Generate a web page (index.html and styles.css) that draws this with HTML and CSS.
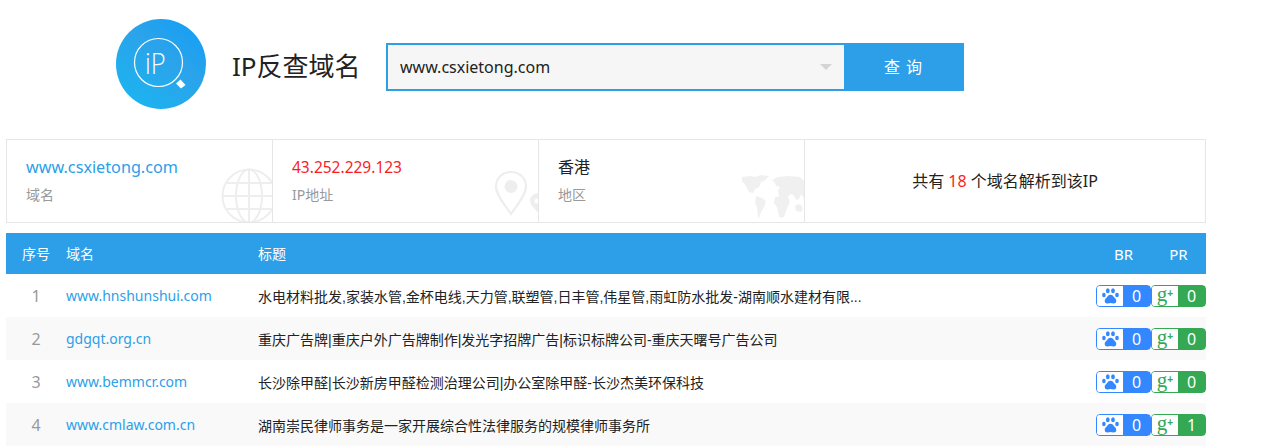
FILE: index.html
```html
<!DOCTYPE html>
<html lang="zh-CN">
<head>
  <meta charset="UTF-8" />
  <title>IP反查域名</title>
  <link rel="stylesheet" href="styles.css">
</head>
<body>
  <header class="search-head">
    <svg class="logo" width="90" height="90" viewBox="0 0 90 90">
      <defs>
        <linearGradient id="logoFill" x1="0.15" y1="0.95" x2="0.85" y2="0.05">
          <stop offset="0" stop-color="#1cb4f0"/>
          <stop offset="0.6" stop-color="#2ba3ea"/>
          <stop offset="1" stop-color="#169ff5"/>
        </linearGradient>
      </defs>
      <circle cx="45" cy="45" r="45" fill="url(#logoFill)"/>
      <circle cx="42.500" cy="43.500" r="24" fill="none" stroke="#fff" stroke-width="1.200"/>
      <text class="logo-text" transform="translate(29 55) scale(0.85 1)">iP</text>
      <path d="M60 64.500l4.500-4 5 5.500-4.500 3.500z" fill="#fff"/>
    </svg>
    <div class="page-title">IP反查域名</div>
    <div class="search-box">
      <div class="search-input">
        <span>www.csxietong.com</span>
        <i class="caret"></i>
      </div>
      <div class="search-btn">查 询</div>
    </div>
  </header>

  <section class="info-bar">
    <div class="info-cell">
      <a class="info-val link">www.csxietong.com</a>
      <div class="info-label">域名</div>
      <svg class="bg-icon globe" width="54" height="58" viewBox="0 0 54 58" fill="none" stroke="#eeeeee" stroke-width="2">
        <circle cx="28" cy="29" r="26.500"/>
        <ellipse cx="28" cy="29" rx="13" ry="26.500"/>
        <path d="M28 2v54M2 29h52M6 16h44M6 42h44"/>
      </svg>
    </div>
    <div class="info-cell">
      <div class="info-val red">43.252.229.123</div>
      <div class="info-label">IP地址</div>
      <svg class="bg-icon pin" width="46" height="46" viewBox="0 0 46 46">
        <path d="M17 2C8 2 2 8.500 2 16.500 2 25 11 35 17 44c6-9 15-19 15-27.500C32 8.500 26 2 17 2z" fill="none" stroke="#eeeeee" stroke-width="2.200"/>
        <circle cx="17" cy="16.500" r="6.500" fill="#eeeeee"/>
        <path d="M45 23c-5 0-9 3.500-9 7.500 0 4 5 9 9 13z" fill="#eeeeee"/>
        <circle cx="43" cy="31" r="2.500" fill="#fff"/>
      </svg>
    </div>
    <div class="info-cell">
      <div class="info-val">香港</div>
      <div class="info-label">地区</div>
      <svg class="bg-icon map" width="62" height="46" viewBox="0 0 62 46" fill="#f0f0f0">
        <path d="M0 3l8-1 5 1 6-2 8 1-5 5-3 1-2 5-4 2-2 4-4-1-3-6-4-5z"/>
        <path d="M14 22l6 2 4 3-2 6-3 5-2 6-1-1-1-9-2-6z"/>
        <path d="M30 6l6-3 10-1 12 1 4 4v17l-3-4-2 5-3 1-1-3-3-3-3 1-1 2 1 3-3 1-5-1-2-4-1-5 2-4-4-1-1-3z"/>
        <path d="M33 23l7-1 5 3 3 2-2 5-2 5-2 6-4 1-2-6-1-5-3-4z"/>
        <path d="M55 30l4 1 2 4-2 3-5-1-1-4z"/>
      </svg>
    </div>
    <div class="info-total">共有 <em>18</em> 个域名解析到该IP</div>
  </section>

  <section class="result-table">
    <div class="row table-head">
      <div class="col-no">序号</div>
      <div class="col-domain">域名</div>
      <div class="col-title">标题</div>
      <div class="col-br">BR</div>
      <div class="col-pr">PR</div>
    </div>
    <div class="row">
      <div class="col-no">1</div>
      <div class="col-domain"><a>www.hnshunshui.com</a></div>
      <div class="col-title">水电材料批发,家装水管,金杯电线,天力管,联塑管,日丰管,伟星管,雨虹防水批发-湖南顺水建材有限...</div>
      <div class="col-badges">
        <span class="badge br"><i><svg class="paw" width="17" height="16" viewBox="0 0 17 16"><use href="#paw"/></svg></i><b>0</b></span>
        <span class="badge pr"><i>g<sup>+</sup></i><b>0</b></span>
      </div>
    </div>
    <div class="row">
      <div class="col-no">2</div>
      <div class="col-domain"><a>gdgqt.org.cn</a></div>
      <div class="col-title">重庆广告牌|重庆户外广告牌制作|发光字招牌广告|标识标牌公司-重庆天曙号广告公司</div>
      <div class="col-badges">
        <span class="badge br"><i><svg class="paw" width="17" height="16" viewBox="0 0 17 16"><use href="#paw"/></svg></i><b>0</b></span>
        <span class="badge pr"><i>g<sup>+</sup></i><b>0</b></span>
      </div>
    </div>
    <div class="row">
      <div class="col-no">3</div>
      <div class="col-domain"><a>www.bemmcr.com</a></div>
      <div class="col-title">长沙除甲醛|长沙新房甲醛检测治理公司|办公室除甲醛-长沙杰美环保科技</div>
      <div class="col-badges">
        <span class="badge br"><i><svg class="paw" width="17" height="16" viewBox="0 0 17 16"><use href="#paw"/></svg></i><b>0</b></span>
        <span class="badge pr"><i>g<sup>+</sup></i><b>0</b></span>
      </div>
    </div>
    <div class="row">
      <div class="col-no">4</div>
      <div class="col-domain"><a>www.cmlaw.com.cn</a></div>
      <div class="col-title">湖南崇民律师事务是一家开展综合性法律服务的规模律师事务所</div>
      <div class="col-badges">
        <span class="badge br"><i><svg class="paw" width="17" height="16" viewBox="0 0 17 16"><use href="#paw"/></svg></i><b>0</b></span>
        <span class="badge pr"><i>g<sup>+</sup></i><b>1</b></span>
      </div>
    </div>
  </section>

  <svg class="sprite" width="0" height="0">
    <symbol id="paw" viewBox="0 0 17 16">
      <ellipse cx="1.900" cy="7" rx="1.800" ry="2.300"/>
      <ellipse cx="5.800" cy="2.700" rx="1.900" ry="2.500"/>
      <ellipse cx="11" cy="2.700" rx="1.900" ry="2.500"/>
      <ellipse cx="15" cy="7" rx="1.800" ry="2.300"/>
      <path d="M8.500 6.800c-2.200 0-3 1.900-4.300 3.200C3 11.200 2.700 12 2.700 13c0 1.800 1.500 2.700 3 2.500 1-.1 1.800-.4 2.800-.4s1.800.3 2.800.4c1.500.2 3-.7 3-2.500 0-1-.3-1.800-1.500-3-1.300-1.300-2.100-3.200-4.300-3.200z"/>
    </symbol>
  </svg>
</body>
</html>
```

FILE: styles.css
```css
* { margin: 0; padding: 0; box-sizing: border-box; }
body {
  width: 1267px;
  height: 447px;
  overflow: hidden;
  background: #fff;
  color: #222;
  font-family: "Noto Sans", "Noto Sans CJK SC", sans-serif;
  font-size: 14px;
}
a { color: #2c9fe8; text-decoration: none; }

.search-head {
  display: flex;
  align-items: center;
  height: 139px;
  padding: 0 0 11px 116px;
}
.logo { flex: none; }
.logo-text {
  fill: #fff;
  font-family: "Open Sans", sans-serif;
  font-weight: 300;
  font-size: 30px;
}
.page-title {
  width: 154px;
  margin: 2px 0 0 26px;
  font-size: 26px;
  color: #222;
}
.search-box {
  display: flex;
  width: 578px;
  height: 48px;
  margin-top: 6px;
  border: 2px solid #2c9fe8;
}
.search-input {
  display: flex;
  align-items: center;
  justify-content: space-between;
  flex: 1;
  padding: 0 12px;
  background: #f6f6f6;
  font-size: 16px;
  color: #222;
}
.caret {
  width: 0;
  height: 0;
  border-left: 6px solid transparent;
  border-right: 6px solid transparent;
  border-top: 6px solid #d4d4d4;
}
.search-btn {
  width: 118px;
  background: #2c9fe8;
  color: #fff;
  font-size: 16px;
  line-height: 44px;
  text-align: center;
  word-spacing: 2px;
}

.info-bar {
  display: flex;
  width: 1200px;
  height: 84px;
  margin-left: 6px;
  border: 1px solid #e6e6e6;
}
.info-cell {
  position: relative;
  width: 266px;
  padding: 16px 0 0 19px;
  border-right: 1px solid #e6e6e6;
  overflow: hidden;
}
.info-val {
  display: block;
  font-size: 16px;
  line-height: 22px;
  color: #222;
}
.info-val.link { font-size: 16.200px; color: #2c9fe8; }
.info-val.red { font-size: 15.500px; color: #f81e1e; }
.info-label {
  margin-top: 7px;
  font-size: 14px;
  line-height: 20px;
  color: #999;
}
.bg-icon { position: absolute; }
.globe { right: -3px; bottom: -3px; }
.pin { right: -2px; bottom: 6px; }
.map { right: 0; bottom: 2px; }
.info-total {
  flex: 1;
  text-align: center;
  line-height: 82px;
  font-size: 16px;
  color: #222;
}
.info-total em { font-style: normal; color: #f81e1e; }

.result-table {
  width: 1200px;
  margin: 10px 0 0 6px;
}
.row {
  display: flex;
  align-items: center;
  height: 43px;
}
.row:nth-child(odd) { background: #f9f9f9; }
.row.table-head {
  height: 41px;
  background: #2c9fe8;
  color: #fff;
}
.col-no { width: 60px; text-align: center; font-size: 16px; color: #999; }
.col-domain { width: 192px; font-size: 14px; }
.col-title {
  flex: 1;
  font-family: "Liberation Sans", "Noto Sans CJK SC", sans-serif;
  font-size: 14px;
  color: #222;
}
.table-head .col-no,
.table-head .col-domain,
.table-head .col-title {
  margin-bottom: 2px;
  font-size: 14px;
  color: #fff;
}
.col-br, .col-pr { width: 55px; text-align: center; font-size: 15px; }
.col-badges { display: flex; width: 110px; }

.badge {
  display: flex;
  width: 55px;
  height: 22px;
  border-radius: 4px;
  border: 1px solid;
}
.badge i {
  display: flex;
  align-items: center;
  justify-content: center;
  width: 26px;
  background: #fff;
  border-radius: 3px 0 0 3px;
  font-style: normal;
}
.badge b {
  flex: 1;
  color: #fff;
  font-weight: 400;
  font-size: 16px;
  line-height: 20px;
  text-align: center;
}
.badge.br { border-color: #3388ff; }
.badge.br b { background: #3388ff; }
.paw { fill: #3388ff; }
.badge.pr { border-color: #34a853; }
.badge.pr b { background: #34a853; }
.badge.pr i {
  color: #34a853;
  font-family: "Liberation Serif", serif;
  font-size: 21px;
  line-height: 20px;
  padding-bottom: 4px;
}
.badge.pr sup {
  font-family: "Liberation Sans", sans-serif;
  font-size: 10px;
  font-weight: 700;
  line-height: 10px;
  vertical-align: 5px;
}
.sprite { position: absolute; }
```
